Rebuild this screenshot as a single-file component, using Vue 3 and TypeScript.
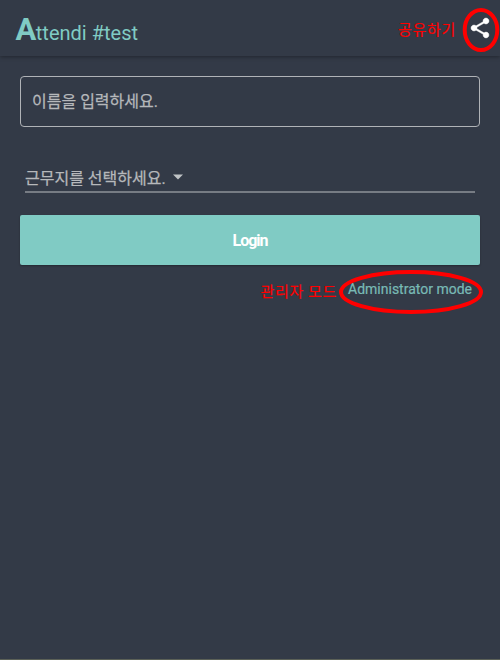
<script setup lang="ts">
import { ref } from 'vue'

const name = ref('')
</script>

<template>
  <div class="screen">
    <header class="app-bar">
      <h1 class="brand"><span class="initial">A</span>ttendi #test</h1>
      <div class="share">
        <span class="note share-note">공유하기</span>
        <button class="share-button" aria-label="공유하기">
          <svg class="share-icon" viewBox="0 0 24 24">
            <path d="M18 16.08c-.76 0-1.44.3-1.96.77L8.91 12.7c.05-.23.09-.46.09-.7s-.04-.47-.09-.7l7.05-4.11c.54.5 1.25.81 2.04.81 1.66 0 3-1.34 3-3s-1.34-3-3-3-3 1.34-3 3c0 .24.04.47.09.7L8.04 9.81C7.5 9.31 6.79 9 6 9c-1.66 0-3 1.34-3 3s1.34 3 3 3c.79 0 1.5-.31 2.04-.81l7.12 4.16c-.05.21-.08.43-.08.65 0 1.61 1.31 2.92 2.92 2.92s2.92-1.31 2.92-2.92-1.31-2.92-2.92-2.92z" />
          </svg>
          <svg class="ring share-ring" viewBox="0 0 38 44">
            <ellipse cx="19" cy="22" rx="16.3" ry="20" />
          </svg>
        </button>
      </div>
    </header>
    <main class="content">
      <input v-model="name" class="name-field" placeholder="이름을 입력하세요." />
      <div class="select">
        <span class="select-label">근무지를 선택하세요.</span>
        <svg class="caret" viewBox="0 0 10 5"><path d="M0 0h10L5 5z" /></svg>
      </div>
      <button class="login">Login</button>
      <div class="admin-row">
        <span class="note admin-note">관리자 모드</span>
        <a class="admin-link">
          Administrator mode
          <svg class="ring admin-ring" viewBox="0 0 144 44">
            <ellipse cx="72" cy="22" rx="70" ry="20" />
          </svg>
        </a>
      </div>
    </main>
  </div>
</template>

<style>
body {
  background: #333a47;
}
</style>

<style scoped>
.screen {
  box-sizing: border-box;
  height: 660px;
  overflow: hidden;
  background: #333a47;
  border-bottom: 1px solid #5b6057;
  font-family: Roboto, "Noto Sans CJK KR", sans-serif;
}
.app-bar {
  box-sizing: border-box;
  display: flex;
  align-items: flex-start;
  justify-content: space-between;
  height: 56px;
  padding: 0 8px 0 15.5px;
  box-shadow: 0 1px 4px rgba(0, 0, 0, 0.35);
}
.brand {
  margin: 13px 0 0;
  color: #80cbc4;
  font-size: 20px;
  font-weight: 400;
  line-height: 34px;
  white-space: nowrap;
}
.initial {
  font-size: 31px;
  font-weight: 700;
  letter-spacing: -0.5px;
}
.share {
  display: flex;
  gap: 12px;
  padding-top: 16px;
}
.note {
  color: #f00;
  font-family: "Noto Sans CJK KR", sans-serif;
  font-size: 15px;
  letter-spacing: 0.7px;
  line-height: 24px;
  white-space: nowrap;
  -webkit-text-stroke: 0.2px #f00;
}
.share-note {
  margin-top: 1px;
}
.share-button {
  position: relative;
  width: 24px;
  height: 24px;
  padding: 0;
  border: 0;
  background: none;
}
.share-icon {
  display: block;
  width: 24px;
  height: 24px;
  fill: #fff;
  stroke: #fff;
  stroke-width: 0.4;
}
.ring {
  position: absolute;
  fill: none;
  stroke: #f00;
  stroke-width: 4;
  pointer-events: none;
}
.share-ring {
  top: -8px;
  left: -6px;
  width: 38px;
  height: 44px;
}
.content {
  padding: 20px 20px 0;
}
.name-field {
  display: block;
  box-sizing: border-box;
  width: 100%;
  height: 51px;
  padding: 0 11px;
  border: 1px solid #b0b3b7;
  border-radius: 4px;
  outline: none;
  background: none;
  color: #c0c3c6;
  font: 16px Roboto, "Noto Sans CJK KR", sans-serif;
}
.name-field::placeholder {
  color: #b6b8bb;
  opacity: 1;
  -webkit-text-stroke: 0.25px #b6b8bb;
}
.select {
  display: flex;
  align-items: center;
  box-sizing: border-box;
  gap: 7px;
  height: 30px;
  margin: 36px 5px 0;
  border-bottom: 2px solid #777c84;
  color: #b6b8bb;
  font-size: 16px;
  line-height: 24px;
}
.select-label {
  padding-top: 4px;
  -webkit-text-stroke: 0.25px #b6b8bb;
}
.caret {
  width: 10px;
  height: 6px;
  margin-top: -1px;
  fill: #c0c3c6;
}
.login {
  display: block;
  width: 100%;
  height: 50px;
  margin-top: 22px;
  padding: 0;
  border: 0;
  border-radius: 2px;
  background: #80cbc4;
  box-shadow: 0 1px 2px rgba(0, 0, 0, 0.3);
  color: #fff;
  font: 700 16px Roboto, sans-serif;
  letter-spacing: -1px;
}
.admin-row {
  display: flex;
  justify-content: flex-end;
  gap: 11px;
  padding: 14px 8px 0 0;
}
.admin-link {
  position: relative;
  color: #78b9b5;
  font-size: 14px;
  line-height: 20px;
  white-space: nowrap;
  -webkit-text-stroke: 0.2px #78b9b5;
}
.admin-ring {
  top: -9px;
  left: -9px;
  width: 144px;
  height: 44px;
}
</style>
